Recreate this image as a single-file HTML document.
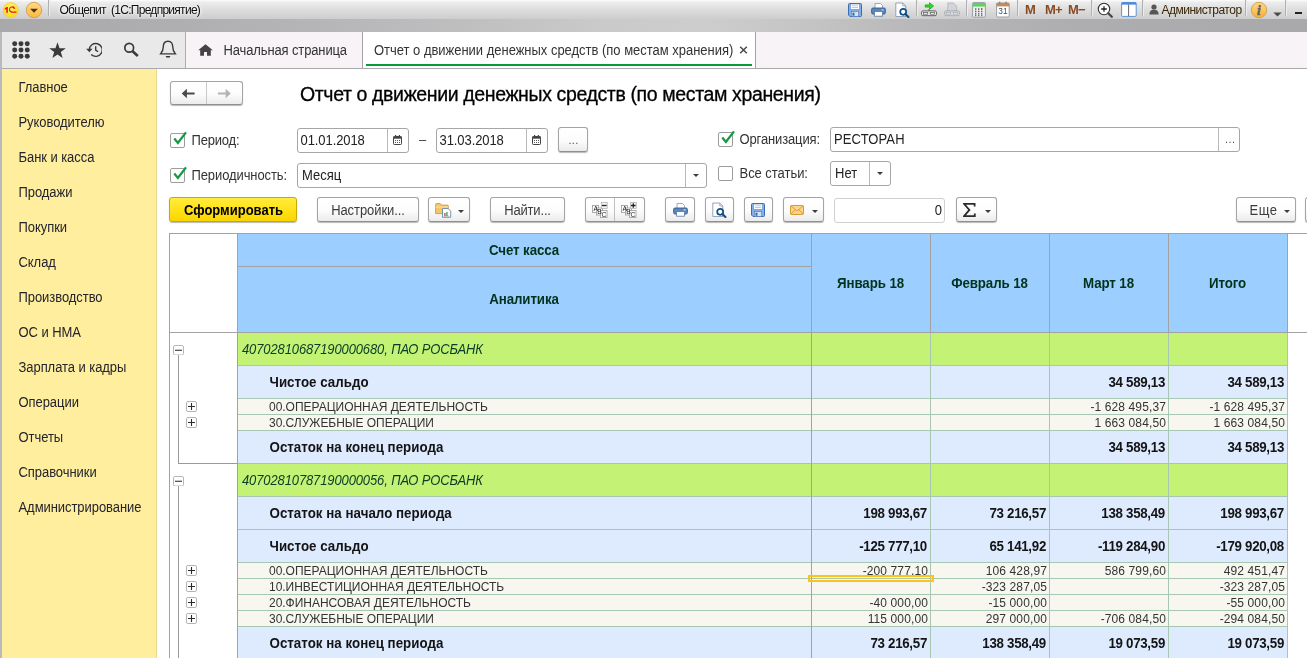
<!DOCTYPE html>
<html><head><meta charset="utf-8">
<style>
*{box-sizing:border-box;margin:0;padding:0}
html,body{width:1307px;height:658px;overflow:hidden;background:#fff}
body{will-change:transform;font-family:"Liberation Sans",sans-serif;font-size:13px;color:#333;position:relative}
.a{position:absolute}
.t{position:absolute;white-space:nowrap;line-height:16px;height:16px}
.s{transform:scaleY(1.111);transform-origin:0 3px}
#titlebar{left:0;top:0;width:1307px;height:32px;background:linear-gradient(#fcfcfc 0,#ededed 2px,#dedede 9px,#cecece 18.500px,#cecece 19px)}
#band{left:0;top:19px;width:1307px;height:13px;background:linear-gradient(90deg,#a9a9ab 0,#adadaf 10%,#b5b4b7 24%,#bfbfc0 36%,#cacaca 46%,#cdcdcd 54%,#c4c4c5 62%,#b8b8ba 70%,#aeaeb0 82%,#a9a9ab 100%)}
#tabrow{left:0;top:32px;width:1307px;height:37px;background:#f7f3f6;border-bottom:1px solid #a9a9ab}
#tools{left:2px;top:32px;width:184px;height:36px;background:#e9e9e9;border-right:1px solid #adadad}
#side{left:2px;top:69px;width:155px;height:589px;background:#ffee9e;border-right:1px solid #e9d98f}
#lborder{left:0;top:32px;width:2px;height:626px;background:#bababc}

.btn{position:absolute;font-size:13px;border:1px solid #a4a4a4;border-bottom-color:#8f8f8f;border-radius:3px;background:linear-gradient(#fff 0,#fcfcfc 55%,#ebebeb 100%);box-shadow:0 1px 1px rgba(0,0,0,.28);color:#3c3c3c;text-align:center;line-height:24px;height:24px;white-space:nowrap}
.inp{position:absolute;border:1px solid #a6a6a6;border-radius:3px;background:#fff;height:25px;font-size:13px;line-height:23px;color:#222;white-space:nowrap;overflow:hidden}
.cb{position:absolute;width:14px;height:14px;border:1px solid #9c9c9c;border-radius:2px;background:#fff}
.sep{position:absolute;top:2px;width:1px;height:17px;background:#b0b0b0;box-shadow:1px 0 0 #ececec}
.caret{position:absolute;width:0;height:0;border-left:3px solid transparent;border-right:3px solid transparent;border-top:3.500px solid #3c3c3c}
</style></head><body>
<div class="a" id="titlebar"></div>
<div class="a" id="band"></div>
<div class="a" id="tabrow"></div>
<div class="a" id="tools"></div>
<div class="a" id="lborder"></div>
<div class="a" id="side"></div>
<svg class="a" style="left:2px;top:1px" width="18" height="18" viewBox="0 0 18 18"><defs><radialGradient id="g1" cx="50%" cy="35%" r="65%"><stop offset="0" stop-color="#fff46a"/><stop offset="1" stop-color="#ffd91c"/></radialGradient></defs><circle cx="8.8" cy="9" r="7.6" fill="url(#g1)" stroke="#e8c93a" stroke-width=".6"/><path d="M2.700 7.400 L4.700 6.100 L5.800 6.100 L5.800 11.700 L4.300 11.700 L4.300 7.900 L2.700 8.700Z" fill="#e3121b"/><path d="M13.300 7.600 A3.200 3.200 0 1 0 9.700 11.700 L14.500 11.700 L14.500 10.400 L9.800 10.400 A1.900 1.900 0 1 1 11.800 8.100 Z" fill="#e3121b"/></svg>
<svg class="a" style="left:25px;top:1px" width="18" height="18" viewBox="0 0 18 18"><defs><linearGradient id="g2" x1="0" y1="0" x2="0" y2="1"><stop offset="0" stop-color="#ffd98a"/><stop offset="1" stop-color="#ffb83c"/></linearGradient></defs><circle cx="9" cy="9" r="7.7" fill="url(#g2)" stroke="#c9a24a" stroke-width=".9"/><path d="M5.100 7.700 L12.900 7.700 L9 11.700Z" fill="#4a3614"/></svg>
<div class="sep" style="left:48px;top:0;height:16px"></div>
<div class="t " style="left:59.5px;top:2px;font-size:12px;color:#0c0c0c;letter-spacing:-.72px;text-shadow:0 0 3px #fff,0 0 5px #fff">Общепит&nbsp; (1С:Предприятие)</div>
<svg class="a" style="left:848px;top:3px" width="14" height="14" viewBox="0 0 14 14"><path d="M.5 1.500a1 1 0 0 1 1-1h11a1 1 0 0 1 1 1v11a1 1 0 0 1-1 1H2L.5 12z" fill="#86afe6" stroke="#3a6cb4"/><rect x="2.600" y="1" width="8.800" height="5.400" fill="#fff" stroke="#4a7cc2" stroke-width=".5"/><path d="M4 2.800h6M4 4.500h6" stroke="#9ab8e0" stroke-width=".7"/><rect x="3.300" y="8.600" width="7.400" height="4.900" fill="#d5e3f5" stroke="#3566ad" stroke-width=".5"/><rect x="4.500" y="9.700" width="2" height="3" fill="#3566ad"/></svg>
<svg class="a" style="left:871px;top:3px" width="15" height="14" viewBox="0 0 15 14"><path d="M4 .5h5.5l2 2V6H4z" fill="#fff" stroke="#7f97b4" stroke-width=".8"/><rect x=".6" y="5" width="13.8" height="6" rx="1.4" fill="#5d86b8" stroke="#2f5c94" stroke-width=".9"/><rect x="3.6" y="8.6" width="7.8" height="4.6" fill="#fff" stroke="#5a7aa3" stroke-width=".8"/><rect x="10.6" y="6.4" width="2" height="1" fill="#dfe9f5"/></svg>
<svg class="a" style="left:895px;top:2px" width="15" height="16" viewBox="0 0 15 16"><path d="M.8 1h7l3 3v10.5H.8z" fill="#fff" stroke="#8a9bb0" stroke-width=".9"/><path d="M7.8 1v3h3" fill="none" stroke="#8a9bb0" stroke-width=".8"/><circle cx="8.2" cy="9.8" r="3" fill="#fff" stroke="#0f4f86" stroke-width="1.7"/><path d="M10.4 12 L13.4 15" stroke="#0f4f86" stroke-width="2.1" stroke-linecap="round"/></svg>
<div class="sep" style="left:916px;top:0;height:16px"></div>
<svg class="a" style="left:921px;top:2px" width="16" height="15" viewBox="0 0 16 15"><path d="M8 7.200v2" stroke="#666" stroke-width="1.200"/><rect x=".6" y="8.900" width="14.800" height="4.800" rx="1.300" fill="#f2f2f2" stroke="#5f5f5f" stroke-width="1"/><rect x="2.600" y="10.500" width="4.200" height="1.700" fill="#fff" stroke="#555" stroke-width=".7"/><rect x="9.200" y="10.500" width="4.200" height="1.700" fill="#fff" stroke="#555" stroke-width=".7"/><path d="M4.200 2.900h4.300V.7L12.600 4 8.500 7.300V5.100H4.200z" fill="#2be01c" stroke="#17941a" stroke-width=".7"/></svg>
<svg class="a" style="left:944px;top:2px" width="16" height="15" viewBox="0 0 16 15"><path d="M3.800 1h5.600l3 3v5H3.800z" fill="#d2d5da" stroke="#adb1b9" stroke-width=".8"/><rect x=".6" y="8.900" width="14.800" height="4.800" rx="1.300" fill="#d9dbdf" stroke="#a9adb5" stroke-width="1"/><rect x="2.600" y="10.500" width="4.200" height="1.700" fill="#e6e7ea" stroke="#a9adb5" stroke-width=".7"/><rect x="9.200" y="10.500" width="4.200" height="1.700" fill="#e6e7ea" stroke="#a9adb5" stroke-width=".7"/></svg>
<div class="sep" style="left:966px;top:0;height:16px"></div>
<svg class="a" style="left:972px;top:2px" width="14" height="16" viewBox="0 0 14 16"><rect x=".6" y=".6" width="12.8" height="14.6" rx="1" fill="#eef1f4" stroke="#8c96a2" stroke-width=".9"/><rect x="1" y="1" width="12" height="3.6" fill="#5fd45a"/><g fill="#555"><rect x="3" y="6.4" width="1.4" height="1.4"/><rect x="6" y="6.4" width="1.4" height="1.4"/><rect x="3" y="8.8" width="1.4" height="1.4"/><rect x="6" y="8.8" width="1.4" height="1.4"/><rect x="9" y="8.8" width="1.4" height="1.4"/><rect x="3" y="11.2" width="1.4" height="1.4"/><rect x="6" y="11.2" width="1.4" height="1.4"/><rect x="9" y="11.2" width="1.4" height="1.4"/><rect x="3" y="13.2" width="1.4" height="1"/><rect x="6" y="13.2" width="1.4" height="1"/><rect x="9" y="13.2" width="1.4" height="1"/></g><rect x="9" y="6" width="1.4" height="2" fill="#e33"/></svg>
<svg class="a" style="left:996px;top:1px" width="14" height="17" viewBox="0 0 14 17"><rect x=".6" y="2" width="12.6" height="14" rx="1" fill="#fff" stroke="#8c96a2" stroke-width=".9"/><rect x=".6" y="2" width="12.6" height="3.4" fill="#c98a5a"/><rect x="3" y=".6" width="1.3" height="2.6" fill="#b9774a"/><rect x="9.4" y=".6" width="1.3" height="2.6" fill="#b9774a"/><text x="6.9" y="13.400" font-family="Liberation Sans" font-size="8.300" text-anchor="middle" fill="#3a4a5a">31</text></svg>
<div class="sep" style="left:1017px;top:0;height:16px"></div>
<div class="t " style="left:1025px;top:2px;font-size:13px;font-weight:bold;color:#8a4a22;letter-spacing:-.6px">M</div>
<div class="t " style="left:1045px;top:2px;font-size:13px;font-weight:bold;color:#8a4a22;letter-spacing:-.8px">M+</div>
<div class="t " style="left:1068px;top:2px;font-size:13px;font-weight:bold;color:#8a4a22;letter-spacing:-.8px">M&minus;</div>
<div class="sep" style="left:1091px;top:0;height:16px"></div>
<svg class="a" style="left:1097px;top:2px" width="17" height="16" viewBox="0 0 17 16"><circle cx="7" cy="7" r="5.7" fill="#fff" stroke="#333" stroke-width="1.1"/><path d="M4.2 7h5.6M7 4.2v5.6" stroke="#222" stroke-width="1.3"/><path d="M11.2 11.2 L14.8 14.8" stroke="#444" stroke-width="2.2" stroke-linecap="round"/></svg>
<svg class="a" style="left:1121px;top:2px" width="16" height="15" viewBox="0 0 16 15"><rect x=".6" y=".6" width="14.6" height="13.8" rx="1" fill="#fff" stroke="#5b92d6" stroke-width="1"/><rect x=".6" y=".4" width="14.6" height="2.2" fill="#3f8ae8"/><path d="M7.6 2.6V14" stroke="#666" stroke-width="1"/></svg>
<div class="sep" style="left:1142px;top:0;height:16px"></div>
<svg class="a" style="left:1149px;top:4px" width="10" height="11" viewBox="0 0 10 11"><circle cx="5" cy="3" r="2.6" fill="#555"/><path d="M.4 10.4c0-3.4 2-4.6 4.6-4.6s4.6 1.2 4.6 4.6z" fill="#555"/></svg>
<div class="t " style="left:1161.5px;top:2px;font-size:12px;color:#3a2606;letter-spacing:-.5px">Администратор</div>
<div class="sep" style="left:1245px;top:0;height:16px"></div>
<svg class="a" style="left:1250px;top:1px" width="18" height="18" viewBox="0 0 18 18"><defs><linearGradient id="g3" x1="0" y1="0" x2="0" y2="1"><stop offset="0" stop-color="#ffd887"/><stop offset="1" stop-color="#f8b236"/></linearGradient></defs><circle cx="9" cy="9" r="7.7" fill="url(#g3)" stroke="#c9a24a" stroke-width=".9"/><text x="9" y="13.800" font-family="Liberation Serif" font-style="italic" font-weight="bold" font-size="14.500" text-anchor="middle" fill="#666" stroke="#666" stroke-width=".5">i</text></svg>
<svg class="a" style="left:1272.500px;top:11.500px" width="9" height="5" viewBox="0 0 9 5"><path d="M.3 .5h8.400L4.500 4.600z" fill="#4a4a4a"/></svg>
<div class="sep" style="left:1285px;top:0;height:16px"></div>
<div class="a" style="left:1295px;top:12px;width:7px;height:2px;background:#222"></div>
<svg class="a" style="left:12px;top:41px" width="18" height="18" viewBox="0 0 17.2 17.2" fill="#3a3a3a"><circle cx="2.6" cy="2.6" r="2.380"/><circle cx="8.6" cy="2.6" r="2.380"/><circle cx="14.6" cy="2.6" r="2.380"/><circle cx="2.6" cy="8.6" r="2.380"/><circle cx="8.6" cy="8.6" r="2.380"/><circle cx="14.6" cy="8.6" r="2.380"/><circle cx="2.6" cy="14.6" r="2.380"/><circle cx="8.6" cy="14.6" r="2.380"/><circle cx="14.6" cy="14.6" r="2.380"/></svg>
<svg class="a" style="left:49px;top:42px" width="17" height="17" viewBox="0 0 17 17"><polygon points="8.50,0.30 10.56,6.17 16.77,6.31 11.83,10.08 13.61,16.04 8.50,12.50 3.39,16.04 5.17,10.08 0.23,6.31 6.44,6.17" fill="#3a3a3a"/></svg>
<svg class="a" style="left:84.500px;top:41.500px" width="17.800" height="16" viewBox="0 0 19 17"><path d="M4.6 8.4 A6.9 6.9 0 1 1 6.6 13.3" fill="none" stroke="#3a3a3a" stroke-width="1.5"/><path d="M1.2 7.2 L8 7.2 L4.6 11Z" fill="#3a3a3a"/><path d="M11.4 4.4V8.6L14 10.4" fill="none" stroke="#3a3a3a" stroke-width="1.5"/></svg>
<svg class="a" style="left:123px;top:42px" width="17" height="16" viewBox="0 0 17 16"><circle cx="6.2" cy="5.8" r="4.4" fill="none" stroke="#3a3a3a" stroke-width="1.7"/><path d="M9.6 9.2 L14.8 14" stroke="#3a3a3a" stroke-width="2.6"/></svg>
<svg class="a" style="left:159px;top:40px" width="18" height="19" viewBox="0 0 18 19"><path d="M9 1.2c-3.4 0-4.7 2.6-4.7 5.6 0 3.4-1 5-2.7 7.1h14.8c-1.7-2.1-2.7-3.7-2.7-7.1 0-3-1.300-5.600-4.700-5.600z" fill="none" stroke="#3a3a3a" stroke-width="1.4"/><path d="M6.600 16h4.800a2.400 1.800 0 0 1-4.800 0z" fill="#3a3a3a"/></svg>
<div class="a" style="left:362px;top:32px;width:1px;height:36px;background:#a4a2a5"></div>
<svg class="a" style="left:198px;top:44px" width="15" height="12" viewBox="0 0 15 13" preserveAspectRatio="none"><path d="M7.500 .3 L.2 6.800 H2.200 V12.700 H6 V8.600 H9 V12.700 H12.800 V6.800 H14.800Z" fill="#444"/></svg>
<div class="t s" style="left:223.5px;top:42px;color:#333;letter-spacing:-.13px">Начальная страница</div>
<div class="a" style="left:363px;top:32px;width:392px;height:36px;background:#fff"></div>
<div class="a" style="left:755px;top:32px;width:1px;height:36px;background:#a4a2a5"></div>
<div class="a" style="left:366px;top:64px;width:386px;height:2px;background:#0a9a3a"></div>
<div class="t s" style="left:374px;top:42px;color:#333;letter-spacing:-.02px">Отчет о движении денежных средств (по местам хранения)</div>
<svg class="a" style="left:739px;top:46px" width="9" height="8" viewBox="0 0 9 8"><path d="M1.200 .8 L7.800 7.200 M7.800 .8 L1.200 7.200" stroke="#4a4a4a" stroke-width="1.500"/></svg>
<div class="t s" style="left:18.5px;top:79px;color:#24242c;letter-spacing:-.06px">Главное</div>
<div class="t s" style="left:18.5px;top:114px;color:#24242c;letter-spacing:-.06px">Руководителю</div>
<div class="t s" style="left:18.5px;top:149px;color:#24242c;letter-spacing:-.06px">Банк и касса</div>
<div class="t s" style="left:18.5px;top:184px;color:#24242c;letter-spacing:-.06px">Продажи</div>
<div class="t s" style="left:18.5px;top:219px;color:#24242c;letter-spacing:-.06px">Покупки</div>
<div class="t s" style="left:18.5px;top:254px;color:#24242c;letter-spacing:-.06px">Склад</div>
<div class="t s" style="left:18.5px;top:289px;color:#24242c;letter-spacing:-.06px">Производство</div>
<div class="t s" style="left:18.5px;top:324px;color:#24242c;letter-spacing:-.06px">ОС и НМА</div>
<div class="t s" style="left:18.5px;top:359px;color:#24242c;letter-spacing:-.06px">Зарплата и кадры</div>
<div class="t s" style="left:18.5px;top:394px;color:#24242c;letter-spacing:-.06px">Операции</div>
<div class="t s" style="left:18.5px;top:429px;color:#24242c;letter-spacing:-.06px">Отчеты</div>
<div class="t s" style="left:18.5px;top:464px;color:#24242c;letter-spacing:-.06px">Справочники</div>
<div class="t s" style="left:18.5px;top:499px;color:#24242c;letter-spacing:-.06px">Администрирование</div>
<div class="btn" style="left:170px;top:81px;width:73px;height:24px"></div>
<div class="a" style="left:206px;top:82px;width:1px;height:22px;background:#c9c9c9"></div>
<svg class="a" style="left:181px;top:88px" width="14.500" height="11" viewBox="0 0 16 12"><path d="M.800 6 L6.500 .800 V4.800 H15 V7.200 H6.500 V11.200Z" fill="#4a4a4a"/></svg>
<svg class="a" style="left:217px;top:88px" width="14.500" height="11" viewBox="0 0 16 12"><path d="M15.200 6 L9.500 .800 V4.800 H1 V7.200 H9.500 V11.200Z" fill="#b4b4b4"/></svg>
<div class="t " style="left:300px;top:86px;font-size:19.500px;letter-spacing:-.37px;color:#000;-webkit-text-stroke:.3px #000;line-height:22px;height:22px;margin-top:-3px">Отчет о движении денежных средств (по местам хранения)</div>
<div class="cb" style="left:170px;top:133px;width:15px;height:15px"><svg class="a" style="left:1px;top:-3px" width="16" height="16" viewBox="0 0 16 16"><path d="M2.300 7.600 L5.900 12 L14 1.400" fill="none" stroke="#139a43" stroke-width="2.300"/></svg></div>
<div class="t s" style="left:191.5px;top:132px;letter-spacing:-.19px">Период:</div>
<div class="inp" style="left:297px;top:128px;width:112px"></div>
<div class="t s" style="left:300.5px;top:132px;color:#222;letter-spacing:-.08px">01.01.2018</div>
<div class="a" style="left:387px;top:129px;width:1px;height:23px;background:#b8b8b8"></div>
<svg class="a" style="left:393px;top:135px" width="9" height="10" viewBox="0 0 9 10"><rect x=".5" y="1.500" width="8" height="8" rx=".8" fill="#fff" stroke="#444" stroke-width="1"/><rect x=".5" y="1.500" width="8" height="2.200" fill="#444"/><rect x="2" y="0" width="1.200" height="2" fill="#444"/><rect x="5.800" y="0" width="1.200" height="2" fill="#444"/><g fill="#555"><rect x="2" y="5" width="1" height="1"/><rect x="4" y="5" width="1" height="1"/><rect x="6" y="5" width="1" height="1"/><rect x="2" y="7" width="1" height="1"/><rect x="4" y="7" width="1" height="1"/><rect x="6" y="7" width="1" height="1"/></g></svg>
<div class="t " style="left:419px;top:132px;color:#333">–</div>
<div class="inp" style="left:436px;top:128px;width:112px"></div>
<div class="t s" style="left:439.5px;top:132px;color:#222;letter-spacing:-.08px">31.03.2018</div>
<div class="a" style="left:526px;top:129px;width:1px;height:23px;background:#b8b8b8"></div>
<svg class="a" style="left:532px;top:135px" width="9" height="10" viewBox="0 0 9 10"><rect x=".5" y="1.500" width="8" height="8" rx=".8" fill="#fff" stroke="#444" stroke-width="1"/><rect x=".5" y="1.500" width="8" height="2.200" fill="#444"/><rect x="2" y="0" width="1.200" height="2" fill="#444"/><rect x="5.800" y="0" width="1.200" height="2" fill="#444"/><g fill="#555"><rect x="2" y="5" width="1" height="1"/><rect x="4" y="5" width="1" height="1"/><rect x="6" y="5" width="1" height="1"/><rect x="2" y="7" width="1" height="1"/><rect x="4" y="7" width="1" height="1"/><rect x="6" y="7" width="1" height="1"/></g></svg>
<div class="btn" style="left:558px;top:127px;width:30px;height:25px;"></div>
<div class="t " style="left:568.5px;top:131.5px;font-size:11px;color:#555;letter-spacing:.3px">...</div>
<div class="cb" style="left:718px;top:132px;width:15px;height:15px"><svg class="a" style="left:1px;top:-3px" width="16" height="16" viewBox="0 0 16 16"><path d="M2.300 7.600 L5.900 12 L14 1.400" fill="none" stroke="#139a43" stroke-width="2.300"/></svg></div>
<div class="t s" style="left:739.5px;top:131px;letter-spacing:-.13px">Организация:</div>
<div class="inp" style="left:830px;top:127px;width:410px"></div>
<div class="t s" style="left:834px;top:131px;color:#222;letter-spacing:.13px">РЕСТОРАН</div>
<div class="a" style="left:1218px;top:128px;width:1px;height:23px;background:#b8b8b8"></div>
<div class="t " style="left:1225px;top:131px;font-size:11px;color:#555;letter-spacing:.4px">...</div>
<div class="cb" style="left:170px;top:168px;width:15px;height:15px"><svg class="a" style="left:1px;top:-3px" width="16" height="16" viewBox="0 0 16 16"><path d="M2.300 7.600 L5.900 12 L14 1.400" fill="none" stroke="#139a43" stroke-width="2.300"/></svg></div>
<div class="t s" style="left:191.5px;top:167px;letter-spacing:-.1px">Периодичность:</div>
<div class="inp" style="left:297px;top:163px;width:410px"></div>
<div class="t s" style="left:302px;top:167px;color:#222">Месяц</div>
<div class="a" style="left:685px;top:164px;width:1px;height:23px;background:#b8b8b8"></div>
<div class="caret" style="left:692.5px;top:174px"></div>
<div class="cb" style="left:718px;top:166px;width:15px;height:15px"></div>
<div class="t s" style="left:739.5px;top:165px;letter-spacing:-.04px">Все статьи:</div>
<div class="inp" style="left:830px;top:161px;width:61px"></div>
<div class="t s" style="left:835px;top:165px;color:#222">Нет</div>
<div class="a" style="left:869px;top:162px;width:1px;height:23px;background:#b8b8b8"></div>
<div class="caret" style="left:876.5px;top:172px"></div>
<div class="btn" style="left:169px;top:197px;width:128px;height:25px;background:linear-gradient(#ffec3d 0,#ffe21a 50%,#fbd500 100%);border-color:#c7a900;"></div>
<div class="t s" style="left:170px;width:127px;text-align:center;top:202px;font-weight:bold;color:#000">Сформировать</div>
<div class="btn" style="left:317px;top:197px;width:102px;height:25px"></div>
<div class="t s" style="left:317px;width:102px;text-align:center;top:202px;color:#3c3c3c;letter-spacing:-.07px">Настройки...</div>
<div class="btn" style="left:428px;top:197px;width:42px;height:25px"></div>
<svg class="a" style="left:435px;top:202px" width="17" height="16" viewBox="0 0 17 16"><path d="M.600 2.500 a1 1 0 0 1 1-1 h3.600 l1.400 1.600 h5.800 a1 1 0 0 1 1 1 V11.600 H.600z" fill="#f3c66a" stroke="#c8963a" stroke-width=".8"/><path d="M.600 5 h12.800" stroke="#fbe3a6" stroke-width="1"/><path d="M7.500 6.500 h5.600 l2.600 2.600 v6.200 h-8.200z" fill="#fff" stroke="#6f8aa8" stroke-width=".9"/><rect x="9.300" y="11" width="1.300" height="3" fill="#e23a2a"/><rect x="11.300" y="10" width="1.300" height="4" fill="#2aa84a"/><path d="M8.600 14.200h5.600" stroke="#888" stroke-width=".6"/></svg>
<div class="caret" style="left:457.5px;top:210px"></div>
<div class="btn" style="left:490px;top:197px;width:75px;height:25px"></div>
<div class="t s" style="left:490px;width:75px;text-align:center;top:202px;color:#3c3c3c;letter-spacing:-.18px">Найти...</div>
<div class="btn" style="left:585px;top:197px;width:60px;height:25px"></div>
<div class="a" style="left:614px;top:198px;width:1px;height:23px;background:#c0c0c0"></div>
<svg class="a" style="left:592px;top:202px" width="16" height="16" viewBox="0 0 16 16"><rect x=".5" y="3.500" width="6" height="7" fill="#fff" stroke="#999" stroke-width=".8"/><rect x="4.500" y="6" width="6" height="7" fill="#fff" stroke="#999" stroke-width=".8"/><rect x="8.500" y="8.500" width="6.500" height="7" fill="#fff" stroke="#999" stroke-width=".8"/><rect x="9.400" y=".6" width="5.800" height="5.800" fill="#f4f4f4" stroke="#aaa" stroke-width=".7"/><path d="M10 3.500h4.600" stroke="#222" stroke-width="1.300"/><g font-family="Liberation Sans" font-size="6.800" fill="#222"><text x="1.400" y="9.300">A</text><text x="5.300" y="11.900">B</text><text x="9.600" y="14.600">C</text></g></svg>
<svg class="a" style="left:621px;top:202px" width="16" height="16" viewBox="0 0 16 16"><rect x=".5" y="3.500" width="6" height="7" fill="#fff" stroke="#999" stroke-width=".8"/><rect x="4.500" y="6" width="6" height="7" fill="#fff" stroke="#999" stroke-width=".8"/><rect x="8.500" y="8.500" width="6.500" height="7" fill="#fff" stroke="#999" stroke-width=".8"/><rect x="9.400" y=".6" width="5.800" height="5.800" fill="#f4f4f4" stroke="#aaa" stroke-width=".7"/><path d="M10 3.500h4.600M12.300 1.200v4.600" stroke="#222" stroke-width="1.300"/><g font-family="Liberation Sans" font-size="6.800" fill="#222"><text x="1.400" y="9.300">A</text><text x="5.300" y="11.900">B</text><text x="9.600" y="14.600">C</text></g></svg>
<div class="btn" style="left:665px;top:197px;width:30px;height:25px"></div>
<svg class="a" style="left:673px;top:203px" width="15" height="14" viewBox="0 0 15 14"><path d="M4 .5h5.500l2 2V6H4z" fill="#fff" stroke="#7f97b4" stroke-width=".8"/><rect x=".6" y="5" width="13.800" height="6" rx="1.400" fill="#5d86b8" stroke="#2f5c94" stroke-width=".9"/><rect x="3.600" y="8.600" width="7.800" height="4.600" fill="#fff" stroke="#5a7aa3" stroke-width=".8"/><rect x="10.600" y="6.400" width="2" height="1" fill="#dfe9f5"/></svg>
<div class="btn" style="left:705px;top:197px;width:29px;height:25px"></div>
<svg class="a" style="left:712px;top:202px" width="15" height="16" viewBox="0 0 15 16"><path d="M.800 1h7l3 3v10.500H.800z" fill="#fff" stroke="#8a9bb0" stroke-width=".9"/><path d="M7.800 1v3h3" fill="none" stroke="#8a9bb0" stroke-width=".8"/><circle cx="8.200" cy="9.800" r="3" fill="#fff" stroke="#0f4f86" stroke-width="1.700"/><path d="M10.400 12 L13.400 15" stroke="#0f4f86" stroke-width="2.100" stroke-linecap="round"/></svg>
<div class="btn" style="left:744px;top:197px;width:29px;height:25px"></div>
<svg class="a" style="left:751px;top:203px" width="14" height="14" viewBox="0 0 14 14"><path d="M.5 1.500a1 1 0 0 1 1-1h11a1 1 0 0 1 1 1v11a1 1 0 0 1-1 1H2L.5 12z" fill="#86afe6" stroke="#3a6cb4"/><rect x="2.600" y="1" width="8.800" height="5.400" fill="#fff" stroke="#4a7cc2" stroke-width=".5"/><path d="M4 2.800h6M4 4.500h6" stroke="#9ab8e0" stroke-width=".7"/><rect x="3.300" y="8.600" width="7.400" height="4.900" fill="#d5e3f5" stroke="#3566ad" stroke-width=".5"/><rect x="4.500" y="9.700" width="2" height="3" fill="#3566ad"/></svg>
<div class="btn" style="left:783px;top:197px;width:41px;height:25px"></div>
<svg class="a" style="left:790px;top:205px" width="14" height="10" viewBox="0 0 14 10"><rect x=".5" y=".5" width="13" height="9" rx=".8" fill="#fbd38a" stroke="#d99a2e"/><path d="M1 1 L7 6 L13 1 M1 9 L5.200 4.600 M13 9 L8.800 4.600" fill="none" stroke="#d99a2e" stroke-width=".9"/></svg>
<div class="caret" style="left:811.5px;top:210px"></div>
<div class="inp" style="left:834px;top:198px;width:111px;border-color:#d0d0d0"></div>
<div class="t s" style="left:742px;width:200px;text-align:right;top:202px;color:#222">0</div>
<div class="btn" style="left:956px;top:197px;width:41px;height:25px"></div>
<svg class="a" style="left:963px;top:203px" width="13" height="14" viewBox="0 0 13 14"><path d="M11.600 3.600 V.800 H1 L6.400 6.900 L1 13.200 H11.800 V10.400" fill="none" stroke="#2c2c2c" stroke-width="1.800"/></svg>
<div class="caret" style="left:984.5px;top:210px"></div>
<div class="btn" style="left:1236px;top:197px;width:60px;height:25px"></div>
<div class="t s" style="left:1249.5px;top:202px;color:#3c3c3c;letter-spacing:.5px">Еще</div>
<div class="caret" style="left:1283.5px;top:210px"></div>
<div class="btn" style="left:1305px;top:197px;width:20px;height:25px"></div>
<div class="a" style="left:169px;top:233px;width:1138px;height:1px;background:#a2a2a2"></div>
<div class="a" style="left:169px;top:233px;width:1px;height:425px;background:#a2a2a2"></div>
<div class="a" style="left:169px;top:332px;width:1138px;height:1px;background:#a2a2a2"></div>
<div class="a" style="left:238px;top:234px;width:1049px;height:98px;background:#9ccfff"></div>
<div class="a" style="left:237px;top:233px;width:1px;height:425px;background:#a2a2a2"></div>
<div class="a" style="left:238px;top:266px;width:573px;height:1px;background:#a2a2a2"></div>
<div class="t s" style="left:374px;width:300px;text-align:center;top:242px;color:#02321c;font-weight:bold;font-size:13.330px;letter-spacing:-.1px">Счет касса</div>
<div class="t s" style="left:374px;width:300px;text-align:center;top:291px;color:#02321c;font-weight:bold;font-size:13.330px;letter-spacing:-.1px">Аналитика</div>
<div class="t s" style="left:720.5px;width:300px;text-align:center;top:275px;color:#02321c;font-weight:bold;font-size:13.330px;letter-spacing:-.1px">Январь 18</div>
<div class="t s" style="left:839.5px;width:300px;text-align:center;top:275px;color:#02321c;font-weight:bold;font-size:13.330px;letter-spacing:-.1px">Февраль 18</div>
<div class="t s" style="left:958.5px;width:300px;text-align:center;top:275px;color:#02321c;font-weight:bold;font-size:13.330px;letter-spacing:-.1px">Март 18</div>
<div class="t s" style="left:1077.5px;width:300px;text-align:center;top:275px;color:#02321c;font-weight:bold;font-size:13.330px;letter-spacing:-.1px">Итого</div>
<div class="a" style="left:238px;top:333px;width:1049px;height:33px;background:#c4f274;border-bottom:1px solid #a6c8b2"></div>
<div class="t s" style="left:242px;top:341px;font-style:italic;color:#0a3c28;font-size:13px;letter-spacing:-.12px">40702810687190000680, ПАО РОСБАНК</div>
<div class="a" style="left:238px;top:366px;width:1049px;height:33px;background:#deebfe;border-bottom:1px solid #a6c8b2"></div>
<div class="t s" style="left:269.5px;top:374px;font-weight:bold;color:#141414;font-size:13.330px;letter-spacing:.02px">Чистое сальдо</div>
<div class="t s" style="left:1025px;width:140px;text-align:right;top:374px;font-weight:bold;color:#141414;font-size:13.330px;letter-spacing:-.3px">34 589,13</div>
<div class="t s" style="left:1144px;width:140px;text-align:right;top:374px;font-weight:bold;color:#141414;font-size:13.330px;letter-spacing:-.3px">34 589,13</div>
<div class="a" style="left:238px;top:399px;width:1049px;height:16px;background:#f7f7f0;border-bottom:1px solid #a6c8b2"></div>
<div class="t " style="left:269px;top:399px;color:#333;font-size:12px;letter-spacing:-.02px">00.ОПЕРАЦИОННАЯ ДЕЯТЕЛЬНОСТЬ</div>
<div class="t " style="left:1026px;width:140px;text-align:right;top:399px;color:#333;font-size:12px;letter-spacing:.12px">-1 628 495,37</div>
<div class="t " style="left:1145px;width:140px;text-align:right;top:399px;color:#333;font-size:12px;letter-spacing:.12px">-1 628 495,37</div>
<div class="a" style="left:238px;top:415px;width:1049px;height:16px;background:#f7f7f0;border-bottom:1px solid #a6c8b2"></div>
<div class="t " style="left:269px;top:415px;color:#333;font-size:12px;letter-spacing:-.02px">30.СЛУЖЕБНЫЕ ОПЕРАЦИИ</div>
<div class="t " style="left:1026px;width:140px;text-align:right;top:415px;color:#333;font-size:12px;letter-spacing:.12px">1 663 084,50</div>
<div class="t " style="left:1145px;width:140px;text-align:right;top:415px;color:#333;font-size:12px;letter-spacing:.12px">1 663 084,50</div>
<div class="a" style="left:238px;top:431px;width:1049px;height:33px;background:#deebfe;border-bottom:1px solid #a6c8b2"></div>
<div class="t s" style="left:269.5px;top:439px;font-weight:bold;color:#141414;font-size:13.330px;letter-spacing:.02px">Остаток на конец периода</div>
<div class="t s" style="left:1025px;width:140px;text-align:right;top:439px;font-weight:bold;color:#141414;font-size:13.330px;letter-spacing:-.3px">34 589,13</div>
<div class="t s" style="left:1144px;width:140px;text-align:right;top:439px;font-weight:bold;color:#141414;font-size:13.330px;letter-spacing:-.3px">34 589,13</div>
<div class="a" style="left:238px;top:464px;width:1049px;height:33px;background:#c4f274;border-bottom:1px solid #a6c8b2"></div>
<div class="t s" style="left:242px;top:472px;font-style:italic;color:#0a3c28;font-size:13px;letter-spacing:-.12px">40702810787190000056, ПАО РОСБАНК</div>
<div class="a" style="left:238px;top:497px;width:1049px;height:33px;background:#deebfe;border-bottom:1px solid #a6c8b2"></div>
<div class="t s" style="left:269.5px;top:505px;font-weight:bold;color:#141414;font-size:13.330px;letter-spacing:.02px">Остаток на начало периода</div>
<div class="t s" style="left:787px;width:140px;text-align:right;top:505px;font-weight:bold;color:#141414;font-size:13.330px;letter-spacing:-.3px">198 993,67</div>
<div class="t s" style="left:906px;width:140px;text-align:right;top:505px;font-weight:bold;color:#141414;font-size:13.330px;letter-spacing:-.3px">73 216,57</div>
<div class="t s" style="left:1025px;width:140px;text-align:right;top:505px;font-weight:bold;color:#141414;font-size:13.330px;letter-spacing:-.3px">138 358,49</div>
<div class="t s" style="left:1144px;width:140px;text-align:right;top:505px;font-weight:bold;color:#141414;font-size:13.330px;letter-spacing:-.3px">198 993,67</div>
<div class="a" style="left:238px;top:530px;width:1049px;height:33px;background:#deebfe;border-bottom:1px solid #a6c8b2"></div>
<div class="t s" style="left:269.5px;top:538px;font-weight:bold;color:#141414;font-size:13.330px;letter-spacing:.02px">Чистое сальдо</div>
<div class="t s" style="left:787px;width:140px;text-align:right;top:538px;font-weight:bold;color:#141414;font-size:13.330px;letter-spacing:-.3px">-125 777,10</div>
<div class="t s" style="left:906px;width:140px;text-align:right;top:538px;font-weight:bold;color:#141414;font-size:13.330px;letter-spacing:-.3px">65 141,92</div>
<div class="t s" style="left:1025px;width:140px;text-align:right;top:538px;font-weight:bold;color:#141414;font-size:13.330px;letter-spacing:-.3px">-119 284,90</div>
<div class="t s" style="left:1144px;width:140px;text-align:right;top:538px;font-weight:bold;color:#141414;font-size:13.330px;letter-spacing:-.3px">-179 920,08</div>
<div class="a" style="left:238px;top:563px;width:1049px;height:16px;background:#f7f7f0;border-bottom:1px solid #a6c8b2"></div>
<div class="t " style="left:269px;top:563px;color:#333;font-size:12px;letter-spacing:-.02px">00.ОПЕРАЦИОННАЯ ДЕЯТЕЛЬНОСТЬ</div>
<div class="t " style="left:788px;width:140px;text-align:right;top:563px;color:#333;font-size:12px;letter-spacing:.12px">-200 777,10</div>
<div class="t " style="left:907px;width:140px;text-align:right;top:563px;color:#333;font-size:12px;letter-spacing:.12px">106 428,97</div>
<div class="t " style="left:1026px;width:140px;text-align:right;top:563px;color:#333;font-size:12px;letter-spacing:.12px">586 799,60</div>
<div class="t " style="left:1145px;width:140px;text-align:right;top:563px;color:#333;font-size:12px;letter-spacing:.12px">492 451,47</div>
<div class="a" style="left:238px;top:579px;width:1049px;height:16px;background:#f7f7f0;border-bottom:1px solid #a6c8b2"></div>
<div class="t " style="left:269px;top:579px;color:#333;font-size:12px;letter-spacing:-.02px">10.ИНВЕСТИЦИОННАЯ ДЕЯТЕЛЬНОСТЬ</div>
<div class="t " style="left:907px;width:140px;text-align:right;top:579px;color:#333;font-size:12px;letter-spacing:.12px">-323 287,05</div>
<div class="t " style="left:1145px;width:140px;text-align:right;top:579px;color:#333;font-size:12px;letter-spacing:.12px">-323 287,05</div>
<div class="a" style="left:238px;top:595px;width:1049px;height:16px;background:#f7f7f0;border-bottom:1px solid #a6c8b2"></div>
<div class="t " style="left:269px;top:595px;color:#333;font-size:12px;letter-spacing:-.02px">20.ФИНАНСОВАЯ ДЕЯТЕЛЬНОСТЬ</div>
<div class="t " style="left:788px;width:140px;text-align:right;top:595px;color:#333;font-size:12px;letter-spacing:.12px">-40 000,00</div>
<div class="t " style="left:907px;width:140px;text-align:right;top:595px;color:#333;font-size:12px;letter-spacing:.12px">-15 000,00</div>
<div class="t " style="left:1145px;width:140px;text-align:right;top:595px;color:#333;font-size:12px;letter-spacing:.12px">-55 000,00</div>
<div class="a" style="left:238px;top:611px;width:1049px;height:16px;background:#f7f7f0;border-bottom:1px solid #a6c8b2"></div>
<div class="t " style="left:269px;top:611px;color:#333;font-size:12px;letter-spacing:-.02px">30.СЛУЖЕБНЫЕ ОПЕРАЦИИ</div>
<div class="t " style="left:788px;width:140px;text-align:right;top:611px;color:#333;font-size:12px;letter-spacing:.12px">115 000,00</div>
<div class="t " style="left:907px;width:140px;text-align:right;top:611px;color:#333;font-size:12px;letter-spacing:.12px">297 000,00</div>
<div class="t " style="left:1026px;width:140px;text-align:right;top:611px;color:#333;font-size:12px;letter-spacing:.12px">-706 084,50</div>
<div class="t " style="left:1145px;width:140px;text-align:right;top:611px;color:#333;font-size:12px;letter-spacing:.12px">-294 084,50</div>
<div class="a" style="left:238px;top:627px;width:1049px;height:33px;background:#deebfe;border-bottom:1px solid #a6c8b2"></div>
<div class="t s" style="left:269.5px;top:635px;font-weight:bold;color:#141414;font-size:13.330px;letter-spacing:.02px">Остаток на конец периода</div>
<div class="t s" style="left:787px;width:140px;text-align:right;top:635px;font-weight:bold;color:#141414;font-size:13.330px;letter-spacing:-.3px">73 216,57</div>
<div class="t s" style="left:906px;width:140px;text-align:right;top:635px;font-weight:bold;color:#141414;font-size:13.330px;letter-spacing:-.3px">138 358,49</div>
<div class="t s" style="left:1025px;width:140px;text-align:right;top:635px;font-weight:bold;color:#141414;font-size:13.330px;letter-spacing:-.3px">19 073,59</div>
<div class="t s" style="left:1144px;width:140px;text-align:right;top:635px;font-weight:bold;color:#141414;font-size:13.330px;letter-spacing:-.3px">19 073,59</div>
<div class="a" style="left:811px;top:233px;width:1px;height:425px;background:#a2a2a2"></div>
<div class="a" style="left:930px;top:233px;width:1px;height:100px;background:#a2a2a2"></div>
<div class="a" style="left:930px;top:333px;width:1px;height:325px;background:#a6c8b2"></div>
<div class="a" style="left:1049px;top:233px;width:1px;height:100px;background:#a2a2a2"></div>
<div class="a" style="left:1049px;top:333px;width:1px;height:325px;background:#a6c8b2"></div>
<div class="a" style="left:1168px;top:233px;width:1px;height:100px;background:#a2a2a2"></div>
<div class="a" style="left:1168px;top:333px;width:1px;height:325px;background:#a6c8b2"></div>
<div class="a" style="left:1287px;top:233px;width:1px;height:100px;background:#a2a2a2"></div>
<div class="a" style="left:1287px;top:333px;width:1px;height:325px;background:#a6c8b2"></div>
<div class="a" style="left:178px;top:355px;width:1px;height:108px;background:#9a9a9a"></div>
<div class="a" style="left:178px;top:463px;width:60px;height:1px;background:#9a9a9a"></div>
<div class="a" style="left:178px;top:486px;width:1px;height:172px;background:#9a9a9a"></div>
<svg class="a" style="left:173px;top:344.5px" width="11" height="10.5" viewBox="0 0 11 11" preserveAspectRatio="none"><rect x=".5" y=".5" width="10" height="10" rx="1.500" fill="#fff" stroke="#b4b4b4"/><path d="M2 5.500h7" stroke="#2a2a2a" stroke-width="1.100"/></svg>
<svg class="a" style="left:173px;top:475.5px" width="11" height="10.5" viewBox="0 0 11 11" preserveAspectRatio="none"><rect x=".5" y=".5" width="10" height="10" rx="1.500" fill="#fff" stroke="#b4b4b4"/><path d="M2 5.500h7" stroke="#2a2a2a" stroke-width="1.100"/></svg>
<svg class="a" style="left:186px;top:401px" width="11" height="11" viewBox="0 0 11 11" preserveAspectRatio="none"><rect x=".5" y=".5" width="10" height="10" rx="1.500" fill="#fff" stroke="#b4b4b4"/><path d="M2 5.500h7M5.500 2v7" stroke="#2a2a2a" stroke-width="1.100"/></svg>
<svg class="a" style="left:186px;top:417px" width="11" height="11" viewBox="0 0 11 11" preserveAspectRatio="none"><rect x=".5" y=".5" width="10" height="10" rx="1.500" fill="#fff" stroke="#b4b4b4"/><path d="M2 5.500h7M5.500 2v7" stroke="#2a2a2a" stroke-width="1.100"/></svg>
<svg class="a" style="left:186px;top:565px" width="11" height="11" viewBox="0 0 11 11" preserveAspectRatio="none"><rect x=".5" y=".5" width="10" height="10" rx="1.500" fill="#fff" stroke="#b4b4b4"/><path d="M2 5.500h7M5.500 2v7" stroke="#2a2a2a" stroke-width="1.100"/></svg>
<svg class="a" style="left:186px;top:581px" width="11" height="11" viewBox="0 0 11 11" preserveAspectRatio="none"><rect x=".5" y=".5" width="10" height="10" rx="1.500" fill="#fff" stroke="#b4b4b4"/><path d="M2 5.500h7M5.500 2v7" stroke="#2a2a2a" stroke-width="1.100"/></svg>
<svg class="a" style="left:186px;top:597px" width="11" height="11" viewBox="0 0 11 11" preserveAspectRatio="none"><rect x=".5" y=".5" width="10" height="10" rx="1.500" fill="#fff" stroke="#b4b4b4"/><path d="M2 5.500h7M5.500 2v7" stroke="#2a2a2a" stroke-width="1.100"/></svg>
<svg class="a" style="left:186px;top:613px" width="11" height="11" viewBox="0 0 11 11" preserveAspectRatio="none"><rect x=".5" y=".5" width="10" height="10" rx="1.500" fill="#fff" stroke="#b4b4b4"/><path d="M2 5.500h7M5.500 2v7" stroke="#2a2a2a" stroke-width="1.100"/></svg>
<div class="a" style="left:808px;top:575px;width:126px;height:7px;border:2px solid #fcc31a"></div>
</body></html>
